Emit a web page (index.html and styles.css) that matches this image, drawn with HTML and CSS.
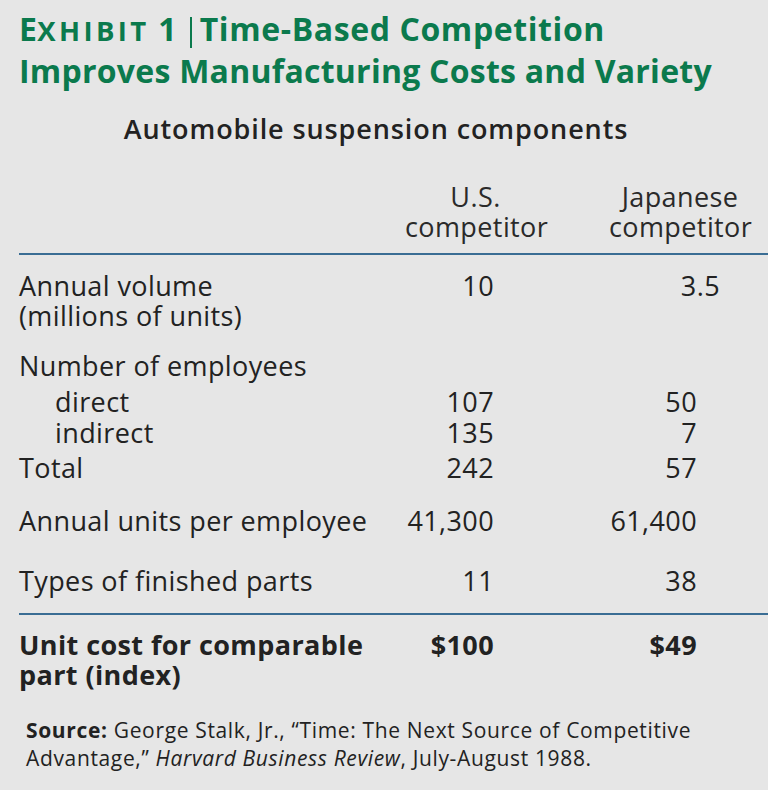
FILE: index.html
```html
<!DOCTYPE html>
<html>
<head>
<meta charset="utf-8">
<link rel="stylesheet" href="styles.css">
</head>
<body>
<div class="page">
  <h1 class="title">E<span class="sc">xhibit</span> 1<span class="bar"></span><span class="t1">Time-Based Competition</span><br>Improves Manufacturing Costs and Variety</h1>
  <h2 class="subtitle">Automobile suspension components</h2>

  <div class="table">
    <div class="row head">
      <div class="label"></div>
      <div class="us">U.S.<br>competitor</div>
      <div class="jp">Japanese<br>competitor</div>
    </div>
    <div class="rule"></div>

    <div class="row r-volume">
      <div class="label">Annual volume<br>(millions of units)</div>
      <div class="us">10</div>
      <div class="jp jp-dec">3.5</div>
    </div>
    <div class="row r-employees">
      <div class="label">Number of employees</div>
      <div class="us"></div>
      <div class="jp"></div>
    </div>
    <div class="row r-direct">
      <div class="label sub">direct</div>
      <div class="us">107</div>
      <div class="jp">50</div>
    </div>
    <div class="row r-indirect">
      <div class="label sub">indirect</div>
      <div class="us">135</div>
      <div class="jp">7</div>
    </div>
    <div class="row r-total">
      <div class="label">Total</div>
      <div class="us">242</div>
      <div class="jp">57</div>
    </div>
    <div class="row r-units">
      <div class="label">Annual units per employee</div>
      <div class="us">41,300</div>
      <div class="jp">61,400</div>
    </div>
    <div class="row r-types">
      <div class="label">Types of finished parts</div>
      <div class="us">11</div>
      <div class="jp">38</div>
    </div>
    <div class="rule rule-bottom"></div>
    <div class="row r-cost strong">
      <div class="label">Unit cost for comparable<br>part (index)</div>
      <div class="us">$100</div>
      <div class="jp">$49</div>
    </div>
  </div>

  <p class="source"><b>Source:</b> George Stalk, Jr., “Time: The Next Source of Competitive<br>Advantage,” <i>Harvard Business Review</i>, July-August 1988.</p>
</div>
</body>
</html>
```
FILE: styles.css
```css
html, body {
  margin: 0;
  padding: 0;
  background: #e6e6e6;
}

.page {
  width: 768px;
  height: 790px;
  background: #e6e6e6;
  color: #222222;
  font-family: "Open Sans", "Noto Sans", sans-serif;
  overflow: hidden;
}

.title {
  margin: 0;
  padding: 9px 0 0 19px;
  font-size: 32px;
  line-height: 40px;
  font-weight: 700;
  letter-spacing: 0.25px;
  color: #0b7a4d;
}

.title .sc {
  text-transform: uppercase;
  font-size: 0.86em;
  letter-spacing: 3.4px;
}

.title .t1 {
  letter-spacing: 0.6px;
}

.title .bar {
  display: inline-block;
  width: 2px;
  height: 31px;
  background: #0b7a4d;
  vertical-align: -7px;
  margin: 0 8px 0 13px;
}

.subtitle {
  margin: 23px 0 0 0;
  padding: 0 35px 0 19px;
  text-align: center;
  font-size: 27px;
  line-height: 30px;
  font-weight: 600;
  letter-spacing: 0.9px;
  color: #222222;
}

.table {
  margin-top: 38px;
  padding-left: 19px;
}

.row {
  display: grid;
  grid-template-columns: 386px 141px 205px;
  font-size: 27px;
  line-height: 30px;
  letter-spacing: 0.4px;
}

.row .us {
  text-align: right;
  padding-right: 52px;
}

.row .jp {
  text-align: right;
  padding-right: 54px;
  padding-left: 63px;
}

.row .jp-dec {
  padding-right: 31px;
}

.row.head .us,
.row.head .jp {
  text-align: center;
  padding-right: 0;
  color: #2a2a2a;
}

.rule {
  height: 2px;
  background: #3a6d94;
  margin-top: 11px;
}

.rule-bottom {
  margin-top: 17px;
}

.r-volume { margin-top: 16px; }
.r-employees { margin-top: 20px; }
.r-direct { margin-top: 6px; }
.r-indirect { margin-top: 1px; }
.r-total { margin-top: 5px; }
.r-units { margin-top: 23px; }
.r-types { margin-top: 30px; }
.r-cost { margin-top: 15px; }

.label.sub {
  padding-left: 36px;
}

.strong {
  font-weight: 700;
}

.source {
  margin: 26px 0 0 0;
  padding-left: 26px;
  font-size: 21px;
  line-height: 28px;
  letter-spacing: 0.65px;
  color: #222222;
}

.source b {
  font-weight: 700;
}
```
